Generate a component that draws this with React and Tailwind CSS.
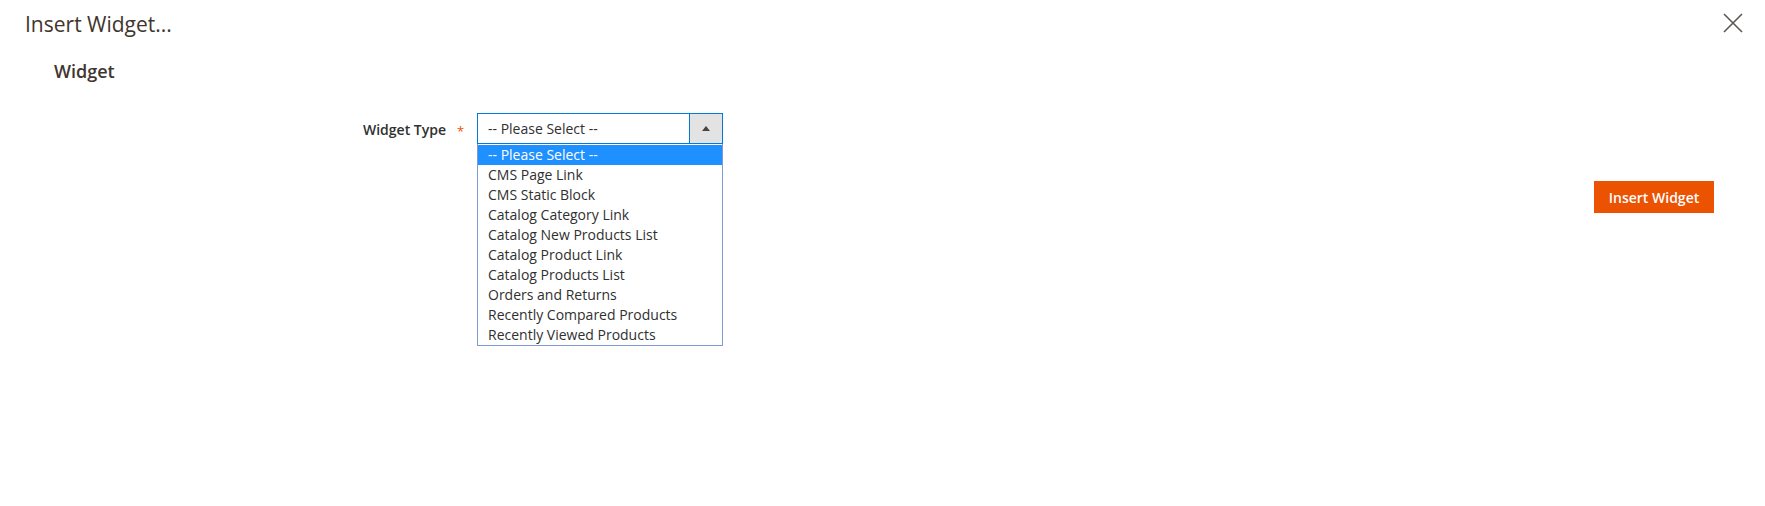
import { useState } from 'react';

const OPTIONS = [
  '-- Please Select --',
  'CMS Page Link',
  'CMS Static Block',
  'Catalog Category Link',
  'Catalog New Products List',
  'Catalog Product Link',
  'Catalog Products List',
  'Orders and Returns',
  'Recently Compared Products',
  'Recently Viewed Products',
];

function CloseIcon() {
  return (
    <svg width="20" height="20" viewBox="0 0 20 20" fill="none">
      <path d="M1 1L19 19M19 1L1 19" stroke="#5d5752" strokeWidth="1.6" />
    </svg>
  );
}

/**
 * WidgetTypeSelect
 * Fake select with its option list opened below it
 */
function WidgetTypeSelect() {
  const [selected, setSelected] = useState(0);

  return (
    <div className="relative w-[246px]">
      <div className="flex h-[31px] border border-[#007bdb] bg-white">
        <div className="flex-1 pl-[10px] text-[14px] leading-[29px] text-[#303030]">
          {OPTIONS[selected]}
        </div>
        <div className="w-[33px] flex items-center justify-center bg-[#e3e3e3] border-l border-[#007bdb]">
          <svg width="8" height="5" viewBox="0 0 8 5">
            <path d="M4 0L8 5H0Z" fill="#4a4440" />
          </svg>
        </div>
      </div>

      {/* Open option list */}
      <div className="absolute left-0 top-[31px] w-full pt-px bg-white border border-t-0 border-[#7d9ad3] z-10">
        {OPTIONS.map((opt, i) => (
          <div
            key={opt}
            onClick={() => setSelected(i)}
            className={`h-[20px] pl-[10px] text-[14px] leading-[20px] ${
              i === selected ? 'bg-[#1e90ff] text-white' : 'text-[#303030]'
            }`}
          >
            {opt}
          </div>
        ))}
      </div>
    </div>
  );
}

export default function App() {
  return (
    <div className="w-full h-[506px] bg-white font-['Open_Sans',sans-serif]">
      {/* Modal header */}
      <div className="flex items-start justify-between pl-[25px] pr-[22px] pt-[9px]">
        <h1 className="text-[21px] leading-[30px] font-normal text-[#41362f]">Insert Widget...</h1>
        <button className="mt-[4px]">
          <CloseIcon />
        </button>
      </div>

      <h2 className="mt-[20px] pl-[54px] text-[18px] leading-[24px] font-semibold text-[#41362f]">
        Widget
      </h2>

      {/* Widget type field */}
      <div className="mt-[30px] flex items-start">
        <div className="w-[446px] pt-[7px] text-right text-[14px] leading-[20px] font-semibold text-[#303030]">
          Widget Type
        </div>
        <div className="w-[31px] pl-[11px] pt-[10px] text-[13px] leading-[16px] text-[#eb5202]">*</div>
        <WidgetTypeSelect />
      </div>

      <div className="mt-[37px] flex justify-end pr-[51px]">
        <button className="w-[120px] h-[32px] bg-[#eb5202] text-white text-[14px] font-semibold">
          Insert Widget
        </button>
      </div>
    </div>
  );
}
